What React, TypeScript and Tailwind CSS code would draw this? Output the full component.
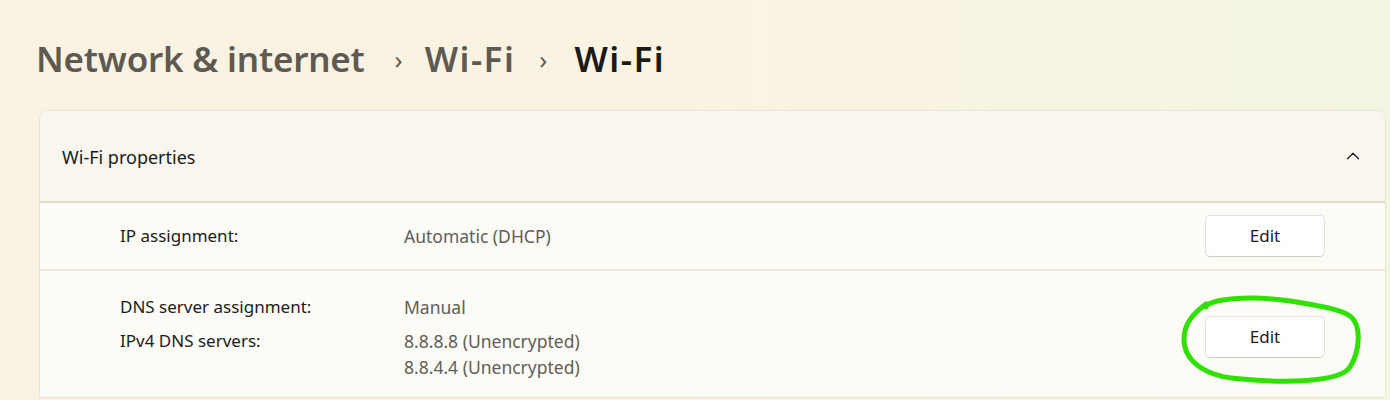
import { ChevronUp } from 'lucide-react';

const font = { fontFamily: '"Noto Sans", "Open Sans", sans-serif' };

function EditButton({ className = '' }: { className?: string }) {
  return (
    <button
      className={`w-[120px] h-[42px] rounded-[5px] bg-white border border-[#e3e1da] border-b-[#cfccc4] text-[17px] text-[#1b1b1b] ${className}`}
    >
      Edit
    </button>
  );
}

export default function App() {
  return (
    <div
      className="w-[1390px] h-[400px] overflow-hidden bg-gradient-to-r from-[#faf2e2] via-[#faf3e1] to-[#f3f6e1] text-[#1b1b1b]"
      style={font}
    >
      <div className="flex items-center h-[110px] pl-[36px] pt-[8px]">
        <span className="text-[35px] font-semibold text-[#5e5a52] tracking-[-0.2px]">Network &amp; internet</span>
        <span className="ml-[30px] mr-[22px] text-[26px] text-[#5e5a52]">›</span>
        <span className="text-[35px] font-semibold text-[#5e5a52] tracking-[1.5px]">Wi-Fi</span>
        <span className="ml-[24px] mr-[27px] text-[26px] text-[#5e5a52]">›</span>
        <span className="text-[35px] font-semibold text-[#1a1a1a] tracking-[1.5px]">Wi-Fi</span>
      </div>

      <div className="ml-[39px] w-[1347px] rounded-t-[8px] border border-[#e8e4d6] overflow-hidden">
        <div className="flex items-center justify-between h-[92px] pl-[22px] pr-[21px] bg-[#f8f6ee] border-b-2 border-[#dedacd]">
          <span className="text-[18px] pt-[3px]">Wi-Fi properties</span>
          <ChevronUp className="w-[22px] h-[22px] text-[#1b1b1b]" strokeWidth={1.3} />
        </div>

        <div className="flex items-center h-[68px] pl-[80px] pr-[60px] bg-[#fcfbf5] border-b-2 border-[#ece8da] text-[17px]">
          <span className="w-[284px]">IP assignment:</span>
          <span className="flex-1 text-[#5f5e5a] text-[17.5px]">Automatic (DHCP)</span>
          <EditButton />
        </div>

        <div className="relative flex items-center h-[126px] pl-[80px] pr-[60px] bg-[#fcfbf5] text-[17px]">
          <div className="w-[284px] flex flex-col gap-[8px] self-start pt-[23px] leading-[26px]">
            <span>DNS server assignment:</span>
            <span>IPv4 DNS servers:</span>
          </div>
          <div className="flex-1 flex flex-col self-start pt-[23px] leading-[26px] text-[#5f5e5a] text-[17.5px]">
            <span className="mb-[8px]">Manual</span>
            <span>8.8.8.8 (Unencrypted)</span>
            <span>8.8.4.4 (Unencrypted)</span>
          </div>
          <EditButton className="mt-[6px]" />
          <svg
            className="absolute left-[1140px] top-[20px] pointer-events-none"
            width="190"
            height="100"
            viewBox="0 0 190 100"
            fill="none"
          >
            <path
              d="M26 16 C 28 8, 70 4, 110 10 C 140 15, 160 18, 170 25 C 182 34, 180 60, 170 76 C 160 92, 100 92, 62 88 C 25 86, 4 70, 4 48 C 4 32, 14 22, 26 13"
              stroke="#2fe000"
              strokeWidth="5"
              strokeLinecap="round"
              strokeLinejoin="round"
            />
          </svg>
        </div>
      </div>
    </div>
  );
}
